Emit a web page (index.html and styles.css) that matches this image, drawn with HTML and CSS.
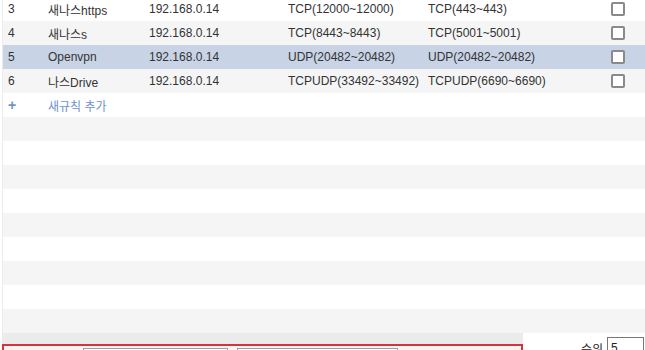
FILE: index.html
```html
<!DOCTYPE html>
<html lang="ko">
<head>
<meta charset="utf-8">
<title>포트포워드 규칙</title>
<link rel="stylesheet" href="styles.css">
</head>
<body>
<div class="rules">
  <div class="row"><span class="c-num">3</span><span>새나스https</span><span>192.168.0.14</span><span>TCP(12000~12000)</span><span>TCP(443~443)</span><span class="c-chk"><span class="chk"></span></span></div>
  <div class="row"><span class="c-num">4</span><span>새나스s</span><span>192.168.0.14</span><span>TCP(8443~8443)</span><span>TCP(5001~5001)</span><span class="c-chk"><span class="chk"></span></span></div>
  <div class="row selected"><span class="c-num">5</span><span>Openvpn</span><span>192.168.0.14</span><span>UDP(20482~20482)</span><span>UDP(20482~20482)</span><span class="c-chk"><span class="chk"></span></span></div>
  <div class="row"><span class="c-num">6</span><span>나스Drive</span><span>192.168.0.14</span><span>TCPUDP(33492~33492)</span><span>TCPUDP(6690~6690)</span><span class="c-chk"><span class="chk"></span></span></div>
  <div class="row add"><span class="c-num plus">+</span><span class="add-label">새규칙 추가</span></div>
  <div class="row"></div>
  <div class="row"></div>
  <div class="row"></div>
  <div class="row"></div>
  <div class="row"></div>
  <div class="row"></div>
  <div class="row"></div>
  <div class="row"></div>
  <div class="row"></div>
</div>
<div class="footer">
  <div class="footer-left">
    <div class="edit-box">
      <span class="field field-a"></span>
      <span class="field field-b"></span>
    </div>
  </div>
  <div class="footer-right">
    <span class="rank-label">순위</span>
    <span class="rank-input">5</span>
  </div>
</div>
</body>
</html>
```
FILE: styles.css
```css
html, body {
  margin: 0;
  padding: 0;
  background: #ffffff;
  overflow: hidden;
}
body {
  font-family: "Liberation Sans", Arial, "Noto Sans CJK KR", sans-serif;
  font-size: 12px;
  color: #333333;
}
.rules {
  margin-top: -3px;
  margin-left: 2px;
  border-left: 1px solid #ececec;
}
.row {
  display: grid;
  grid-template-columns: 45px 101px 139px 140px 183px 1fr;
  height: 24px;
  align-items: center;
  white-space: nowrap;
  background: #ffffff;
}
.row:nth-child(even) {
  background: #f5f5f5;
}
.row.selected {
  background: #c8d4e6;
}
.c-num {
  padding-left: 5px;
}
.c-chk {
  display: flex;
  align-items: center;
}
.chk {
  box-sizing: border-box;
  width: 14px;
  height: 14px;
  border: 2px solid #8a8a8a;
  border-radius: 2px;
  background: #ffffff;
}
.add .plus {
  color: #6f93cc;
  font-weight: bold;
  font-size: 14px;
}
.add-label {
  color: #6f93cc;
}
.footer {
  display: flex;
  height: 40px;
}
.footer-left {
  width: 521px;
  margin-left: 2px;
  padding-top: 11px;
  background: #ebebeb;
}
.edit-box {
  display: flex;
  gap: 9px;
  height: 40px;
  padding: 2px 0 0 79px;
  border: 2px solid #d3343d;
  background: #fcf2f2;
}
.field {
  display: block;
  height: 20px;
  border: 1px solid #9f9aa8;
  background: #ffffff;
}
.field-a {
  width: 143px;
}
.field-b {
  width: 159px;
}
.footer-right {
  flex: 1;
  display: flex;
  justify-content: flex-end;
  align-items: flex-start;
  padding-top: 4px;
  padding-right: 1px;
}
.rank-label {
  font-size: 12px;
  margin-top: 3px;
  margin-right: 4px;
  color: #222222;
}
.rank-input {
  box-sizing: border-box;
  width: 37px;
  height: 22px;
  padding: 3px 0 0 3px;
  border: 1px solid #777777;
  background: #ffffff;
  color: #222222;
}
```
